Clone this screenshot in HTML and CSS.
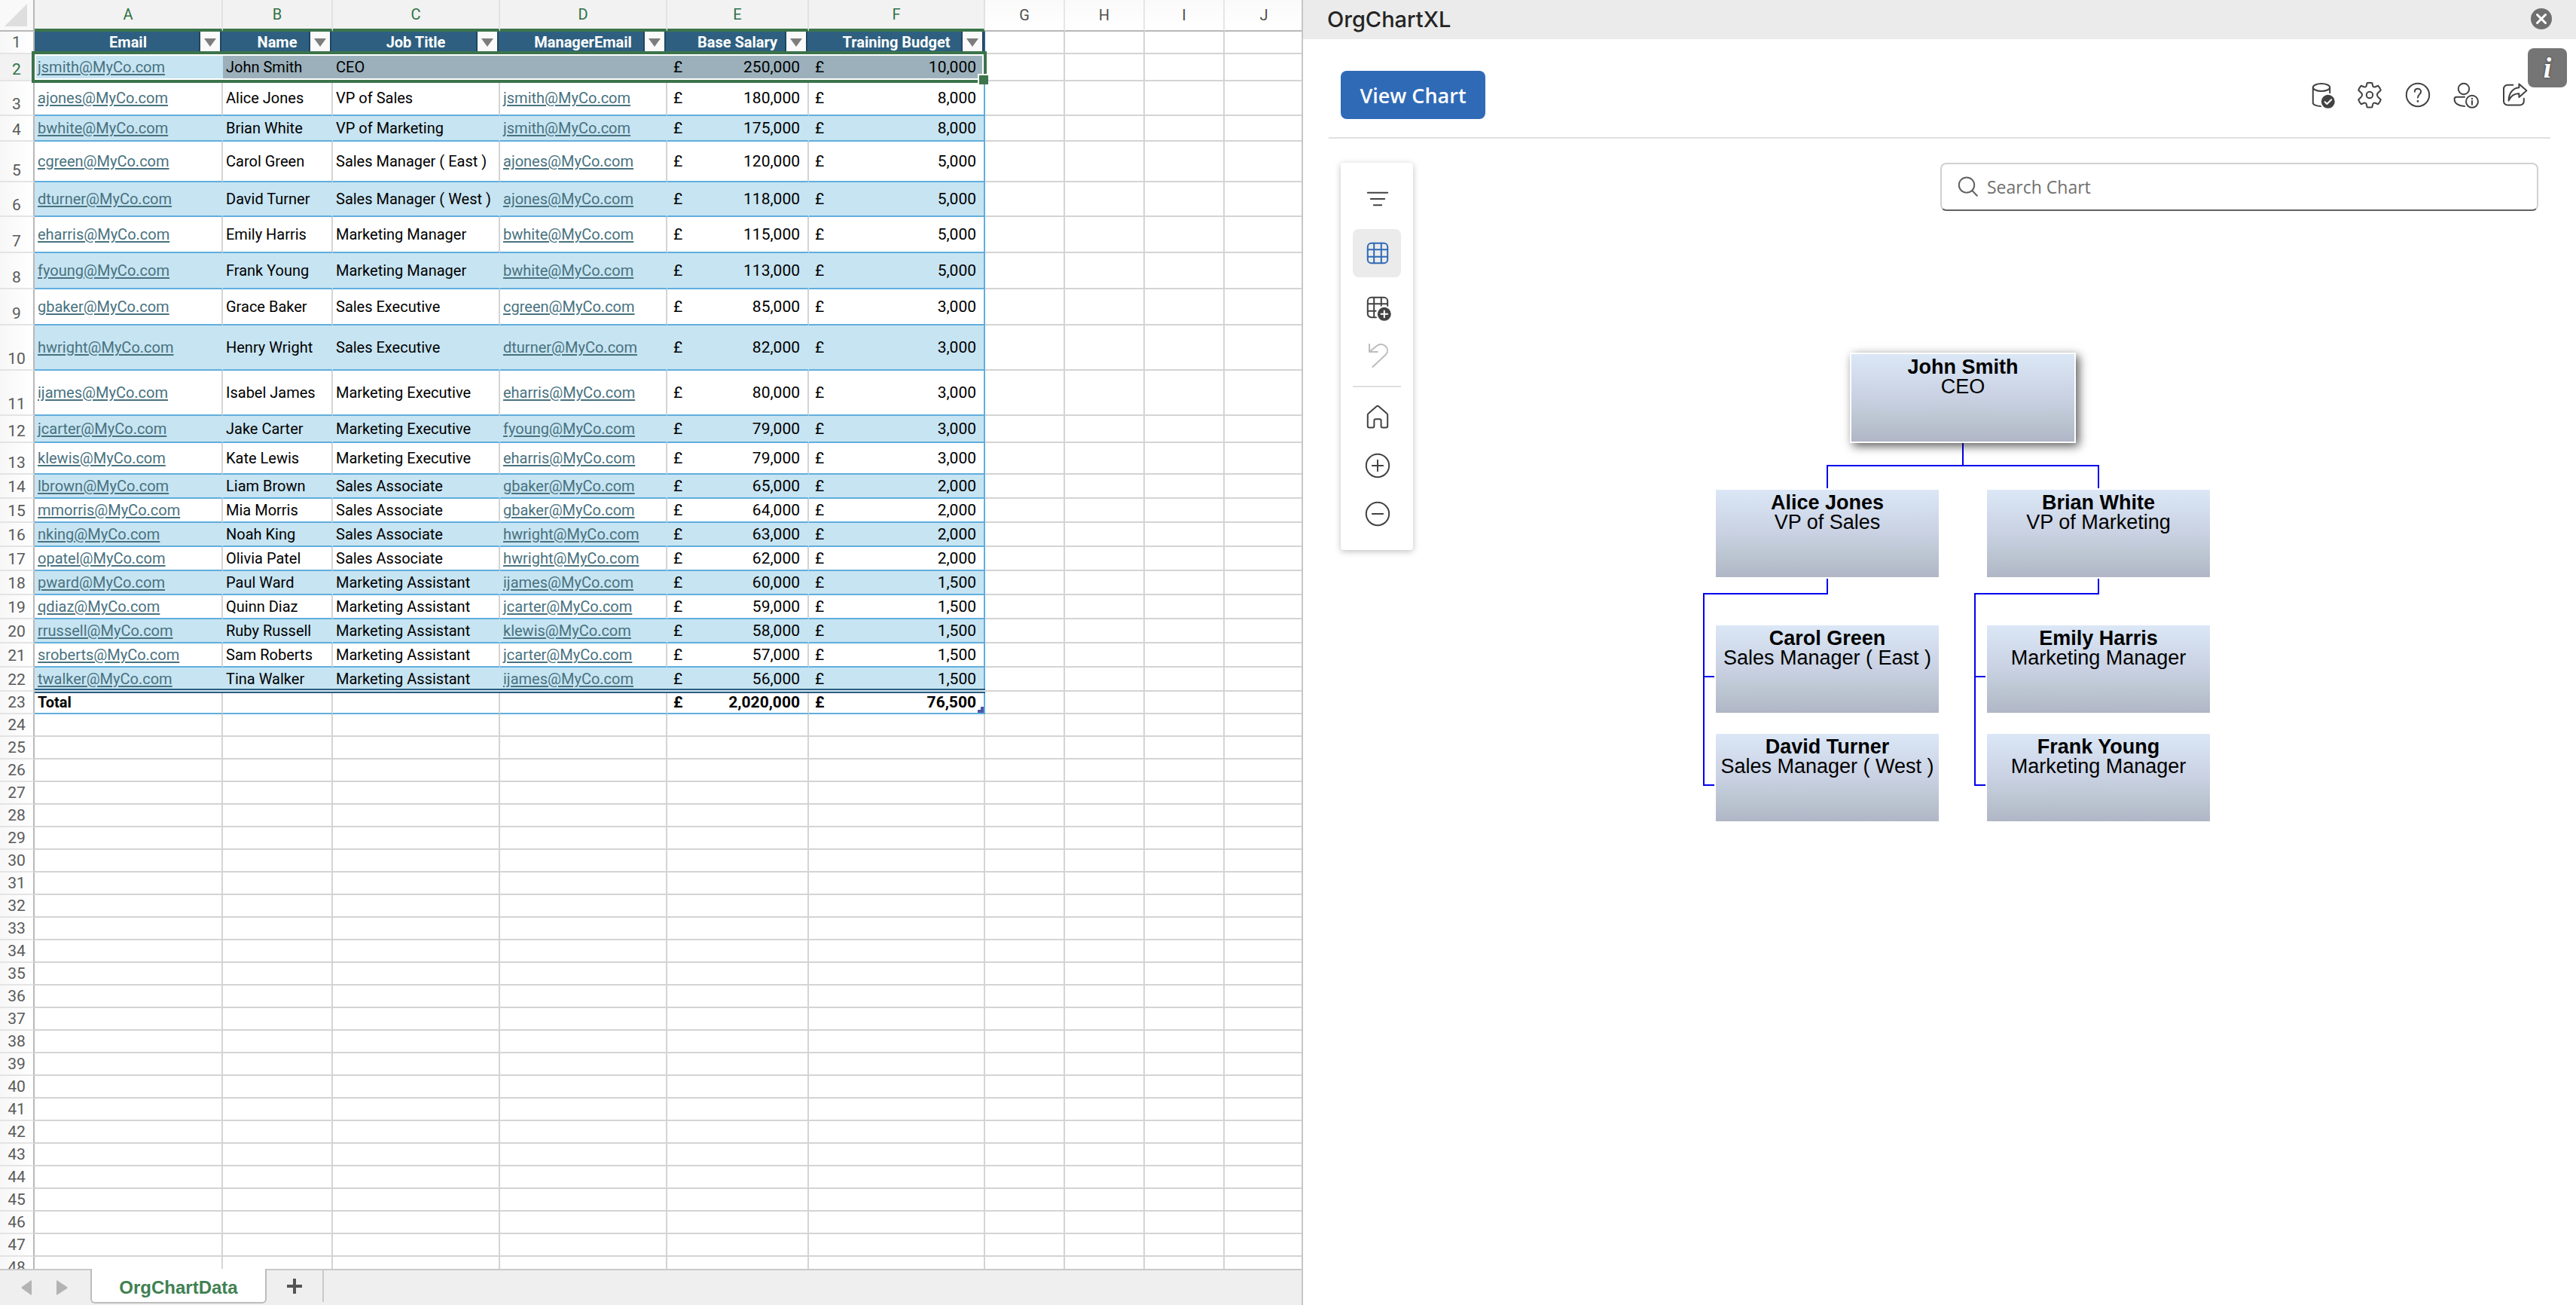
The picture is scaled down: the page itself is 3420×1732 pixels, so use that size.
FILE: index.html
```html
<!DOCTYPE html>
<html lang="en">
<head>
    <meta charset="UTF-8">
    <meta name="viewport" content="width=device-width, initial-scale=1.0">
    <title>OrgChartXL</title>
    <link rel="stylesheet" href="styles.css">
</head>
<body>
    <main class="workbook">
        <div class="grid-area">
            <table class="grid">
                <colgroup>
                    <col class="w-gutter"><col class="w-a"><col class="w-b"><col class="w-c"><col class="w-c"><col class="w-e"><col class="w-f">
                    <col class="w-g"><col class="w-g"><col class="w-g"><col class="w-g">
                </colgroup>
                <thead>
                    <tr>
                        <th class="corner"><svg width="30" height="30" viewBox="0 0 30 30"><path d="M30 0v30H0z" fill="#dedede"/></svg></th>
                        <th class="on">A</th><th class="on">B</th><th class="on">C</th><th class="on">D</th><th class="on">E</th><th class="on">F</th>
                        <th>G</th><th>H</th><th>I</th><th>J</th>
                    </tr>
                </thead>
                <tbody id="rows"></tbody>
            </table>
        </div>
        <nav class="tabs">
            <button class="arrow" aria-label="Previous sheet"><svg width="16" height="20" viewBox="0 0 16 20"><path d="M14 1v18q0 1-1 .5L1 11q-1-1 0-2L13 .5q1-.5 1 .5z"/></svg></button>
            <button class="arrow" aria-label="Next sheet"><svg width="16" height="20" viewBox="0 0 16 20"><path d="M1 1v18q0 1 1 .5L15 11q1-1 0-2L2 .5Q1 0 1 1z"/></svg></button>
            <button class="tab">OrgChartData</button>
            <button class="add" aria-label="Add sheet"><svg width="20" height="20" viewBox="0 0 20 20"><path d="M10 0v20M0 10h20" stroke="#555" stroke-width="4"/></svg></button>
        </nav>
    </main>

    <aside class="pane">
        <header class="pane-title">
            <h1>OrgChartXL</h1>
            <button class="close" aria-label="Close"><svg width="28" height="28" viewBox="0 0 28 28"><circle cx="14" cy="14" r="14" fill="#6f6f6f"/><path d="M8.500 8.500l11 11M19.500 8.500l-11 11" stroke="#fff" stroke-width="3" stroke-linecap="round"/></svg></button>
        </header>
        <button class="info" aria-label="Add-in info">i</button>

        <div class="pane-body">
            <div class="actions">
                <button class="view-chart">View Chart</button>
                <div class="action-icons">
                    <button class="icon" aria-label="Data source">
                        <svg viewBox="0 0 20 20"><ellipse cx="10" cy="5" rx="5.600" ry="2.500"/><path d="M4.400 5v10.200c0 1.300 2.300 2.300 5.400 2.300M15.600 5v3.800"/><circle class="badge" cx="14.400" cy="14.400" r="5"/><path class="mark" d="M12.300 14.600l1.400 1.400 2.900-2.900"/></svg>
                    </button>
                    <button class="icon" aria-label="Settings">
                        <svg viewBox="0 0 20 20"><circle cx="10" cy="10" r="2.100"/><path d="M8.300 2.100q1.700-.5 3.400 0l.4 1.900q.2.900 1.200.8.200 0 .5-.2l1.800-.7q1.300 1.300 1.800 3l-1.400 1.300q-1 .8-1 1.800t1 1.800l1.400 1.300q-.5 1.700-1.800 3l-1.800-.7q-1.400-.4-1.700.8l-.4 1.900q-1.700.4-3.400 0l-.4-1.900q-.4-1.200-1.700-.8l-1.800.7q-1.300-1.300-1.800-3L4 11.800q1-.8 1-1.800t-1-1.800L2.600 6.900q.5-1.700 1.800-3l1.800.7q1.300.4 1.700-.7z"/></svg>
                    </button>
                    <button class="icon" aria-label="Help">
                        <svg viewBox="0 0 20 20"><circle cx="10" cy="10" r="7.600"/><path d="M7.900 7.900c0-1.200.9-2 2.100-2s2.100.8 2.100 1.900c0 1.700-2.100 1.900-2.100 4"/><circle class="solid" cx="10" cy="14.200" r=".7"/></svg>
                    </button>
                    <button class="icon" aria-label="Account">
                        <svg viewBox="0 0 20 20"><circle cx="8.500" cy="6" r="3.600"/><path d="M9 11.400H3.600c-.7 0-1.300.6-1.300 1.300 0 3 3 4.800 6.700 4.800M14 14v2.400"/><circle cx="14" cy="14.400" r="4"/><circle class="solid" cx="14" cy="12.500" r=".6"/></svg>
                    </button>
                    <button class="icon" aria-label="Share">
                        <svg viewBox="0 0 20 20"><path d="M9.200 3.400H5.600A2.600 2.600 0 0 0 3 6v8.200a2.600 2.600 0 0 0 2.600 2.600h8.200a2.600 2.600 0 0 0 2.600-2.600v-1.800"/><path d="M13.200 2.700l5 4.400-5 4.400V9.100c-3.200-.2-5.300 1.200-6.900 4.700.1-4.400 2.200-8.300 6.900-8.700z"/></svg>
                    </button>
                </div>
            </div>

            <div class="stage">
                <div class="toolbar">
                    <button class="icon" aria-label="Filter"><svg viewBox="0 0 20 20"><path d="M3.400 5.900h13.200M5.400 10h9.200M7.400 14.100h5.200"/></svg></button>
                    <button class="icon active" aria-label="Grid"><svg viewBox="0 0 20 20"><rect x="3.400" y="3.400" width="13.200" height="13.200" rx="2.400"/><path d="M7.600 3.400v13.200M12.400 3.400v13.200M3.400 7.600h13.200M3.400 12.400h13.200"/></svg></button>
                    <button class="icon" aria-label="Add column"><svg viewBox="0 0 20 20"><path d="M9.200 16.600H5.800a2.400 2.400 0 0 1-2.400-2.400V5.800a2.400 2.400 0 0 1 2.400-2.400h8.400a2.400 2.400 0 0 1 2.400 2.400v3.400M7.600 3.400v13.200M12.400 3.400v5.800M3.400 7.600h13.200M3.400 12.400H9"/><circle class="badge" cx="14.400" cy="14.400" r="5"/><path class="mark" d="M14.400 12.200v4.400M12.200 14.400h4.400"/></svg></button>
                    <button class="icon" aria-label="Undo" disabled><svg viewBox="0 0 20 20"><path d="M4.500 2.500v5h5.400M4.700 7.300l4.600-3.700c4-3.200 9.500 1.500 6.200 5.600L6.700 17.500"/></svg></button>
                    <hr>
                    <button class="icon" aria-label="Home"><svg viewBox="0 0 20 20"><path d="M9.200 2.700a1.200 1.200 0 0 1 1.600 0l5.300 4.700q.5.400.5 1.100v7.300q0 1-1 1h-2.300q-1 0-1-1v-3.600q0-1.100-1-1.100H8.700q-1 0-1 1.100v3.600q0 1-1 1H4.400q-1 0-1-1V8.500q0-.7.5-1.100z"/></svg></button>
                    <button class="icon" aria-label="Zoom in"><svg viewBox="0 0 20 20"><circle cx="10" cy="10" r="7.600"/><path d="M10 6.400v7.200M6.400 10h7.200"/></svg></button>
                    <button class="icon" aria-label="Zoom out"><svg viewBox="0 0 20 20"><circle cx="10" cy="10" r="7.600"/><path d="M6.400 10h7.200"/></svg></button>
                </div>

                <div class="chart-area">
                    <label class="search">
                        <svg viewBox="0 0 20 20"><circle cx="8.500" cy="8.800" r="5.100"/><path d="M12.200 12.500l3.200 3.400"/></svg>
                        <input type="text" placeholder="Search Chart" aria-label="Search Chart">
                    </label>
                    <div class="chart-scroll">
                        <div class="org-chart">
                            <svg class="links" width="692" height="622" viewBox="0 0 692 622">
                                <path d="M346 120v30M166 180v-30h360v30"/>
                                <path d="M166 300v20H2v254h14M2 430h14"/>
                                <path d="M526 300v20H362v254h14M362 430h14"/>
                            </svg>
                            <div class="node n-ceo"><b>John Smith</b>CEO</div>
                            <div class="node n-sales"><b>Alice Jones</b>VP of Sales</div>
                            <div class="node n-marketing"><b>Brian White</b>VP of Marketing</div>
                            <div class="node n-east"><b>Carol Green</b>Sales Manager ( East )</div>
                            <div class="node n-emily"><b>Emily Harris</b>Marketing Manager</div>
                            <div class="node n-west"><b>David Turner</b>Sales Manager ( West )</div>
                            <div class="node n-frank"><b>Frank Young</b>Marketing Manager</div>
                        </div>
                    </div>
                </div>
            </div>
        </div>
    </aside>

    <script src="script.js"></script>
</body>
</html>
```
FILE: styles.css
```css
* {
    box-sizing: border-box;
}
body {
    margin: 0;
    height: 100vh;
    display: grid;
    grid-template-columns: 865fr 845fr;
    overflow: hidden;
    background: #fff;
    font-family: "Open Sans", sans-serif;
    color: #242424;
}
button {
    border: 0;
    padding: 0;
    background: none;
    font: inherit;
    color: inherit;
}

/* ---- worksheet ---- */
.workbook {
    display: flex;
    flex-direction: column;
    min-width: 0;
    height: 100vh;
    border-right: 2px solid #c6c6c6;
}
.grid-area {
    flex: 1;
    min-height: 0;
    overflow: hidden;
}
.grid {
    table-layout: fixed;
    width: 1732px;
    border-collapse: separate;
    border-spacing: 0;
    font-family: Roboto, sans-serif;
    font-size: 20px;
    line-height: 24px;
    color: #000;
}
.w-gutter { width: 46px; }
.w-a { width: 250px; }
.w-b { width: 146px; }
.w-c { width: 222px; }
.w-e { width: 188px; }
.w-f { width: 234px; }
.w-g { width: 106px; }

.grid thead th {
    height: 42px;
    padding: 0;
    font-weight: 400;
    color: #505050;
    background: linear-gradient(#fafafa, #fff);
    border-right: 2px solid #e6e6e6;
    border-bottom: 2px solid #b8b8b8;
}
.grid thead .on {
    color: #2f7145;
    background: #f2f2f2;
    border-bottom: 4px solid #3c744b;
    border-right-color: #e2e2e2;
}
.grid thead .corner {
    padding-left: 6px;
    border-right-color: #b8b8b8;
    background: #f9f9f9;
}
.corner svg {
    display: block;
}
.grid td {
    padding: 0 4px;
    border-right: 2px solid #d4d4d4;
    border-bottom: 2px solid #d4d4d4;
    white-space: nowrap;
}
.row-no {
    padding: 0;
    height: 30px;
    vertical-align: bottom;
    font-weight: 400;
    font-size: 21px;
    line-height: 28px;
    color: #5a5a5a;
    background: linear-gradient(90deg, #f7f7f7, #fff);
    border-right: 2px solid #b8b8b8;
    border-bottom: 2px solid #e4e4e4;
}
.h-32 .row-no { height: 32px; }
.h-34 .row-no { height: 34px; }
.h-36 .row-no { height: 36px; }
.h-42 .row-no { height: 42px; }
.h-46 .row-no { height: 46px; }
.h-48 .row-no { height: 48px; }
.h-54 .row-no { height: 54px; }
.h-60 .row-no { height: 60px; }

.grid .field {
    position: relative;
    background: #2e5f80;
    border-color: #2e5f80;
    color: #fff;
    font-weight: 700;
    text-align: center;
}
.filter {
    position: absolute;
    right: 0;
    top: 0;
    width: 30px;
    height: 28px;
    display: flex;
    align-items: center;
    justify-content: center;
    background: #fafafa;
    border: solid #1f4661;
    border-width: 0 2px;
}
.filter svg {
    fill: #7d7d7d;
}
.grid .data {
    border-bottom-color: #60aedd;
}
.band .data {
    background: #c7e4f2;
    border-right-color: #c7e4f2;
}
.grid .last {
    border-right-color: #60aedd;
}
.data a {
    color: #48727f;
    text-decoration-thickness: 2px;
    text-underline-offset: 2px;
}
.money {
    display: flex;
    justify-content: space-between;
    padding: 0 6px 0 4px;
    font-size: 21px;
}
.selected .row-no {
    color: #2f7145;
    background: #f2f2f2;
}
.selected .data {
    background: #9bb0bb;
    border-right-color: #9bb0bb;
}
.selected .anchor {
    position: relative;
    background: #c7e4f2;
    border-right-color: #c7e4f2;
}
.selection {
    position: absolute;
    z-index: 1;
    left: -4px;
    top: -4px;
    bottom: -4px;
    width: 1268px;
    border: 4px solid #3c744b;
    box-shadow: inset 0 0 0 2px #fff;
}
.selection::after {
    content: "";
    position: absolute;
    right: -6px;
    bottom: -6px;
    width: 12px;
    height: 12px;
    background: #3c744b;
    border: 2px solid #fff;
    border-width: 2px 0 0 2px;
}
.total .data {
    position: relative;
    font-weight: 700;
}
/* double rule across the six table columns */
.rule {
    position: absolute;
    left: 0;
    top: -4px;
    width: 1262px;
    height: 6px;
    background: #d5e6f0;
    border: solid #2b5d80;
    border-width: 2px 0;
    z-index: 1;
}
.resize {
    position: absolute;
    right: 0;
    bottom: 0;
    display: block;
}

.tabs {
    flex: 0 0 48px;
    display: flex;
    align-items: flex-start;
    background: #efefef;
    border-top: 2px solid #c9c9c9;
    padding-left: 28px;
}
.arrow {
    height: 46px;
    width: 46px;
    padding-top: 5px;
    text-align: left;
}
.arrow svg {
    fill: #b3b3b3;
}
.tab {
    width: 234px;
    height: 46px;
    margin-top: -2px;
    background: #fff;
    border: 2px solid #bdbdbd;
    border-top: 0;
    border-radius: 0 0 6px 6px;
    font-family: "Liberation Sans", sans-serif;
    font-size: 24px;
    font-weight: 700;
    padding-top: 6px;
    color: #3f8152;
}
.add {
    width: 76px;
    height: 42px;
    padding-top: 4px;
    border-right: 2px solid #c9c9c9;
}

/* ---- task pane ---- */
.pane {
    position: relative;
    min-width: 0;
}
.pane-title {
    height: 52px;
    padding: 0 32px 2px;
    display: flex;
    align-items: center;
    justify-content: space-between;
    background: #ebebeb;
}
.pane-title h1 {
    margin: 0;
    font-family: Inter, sans-serif;
    font-size: 29px;
    font-weight: 500;
}
.close svg {
    display: block;
}
.info {
    position: absolute;
    top: 64px;
    right: 12px;
    width: 52px;
    height: 52px;
    border-radius: 8px;
    background: #757575;
    color: #fff;
    font: italic bold 38px "Liberation Serif", serif;
    text-shadow: 0 0 3px #333;
}
.pane-body {
    padding: 0 34px;
}
.actions {
    display: flex;
    align-items: center;
    justify-content: space-between;
    height: 132px;
    padding: 18px 16px 0;
    border-bottom: 2px solid #e0e0e0;
}
.view-chart {
    width: 192px;
    height: 64px;
    border-radius: 8px;
    background: #2f6ab7;
    color: #fff;
    font-size: 27px;
    font-weight: 600;
}
.action-icons {
    display: flex;
}
.icon {
    width: 64px;
    height: 64px;
    display: flex;
    align-items: center;
    justify-content: center;
    color: #424242;
}
.icon svg,
.search svg {
    width: 40px;
    height: 40px;
    fill: none;
    stroke: currentColor;
    stroke-width: 1;
    stroke-linecap: round;
    stroke-linejoin: round;
}
.icon .solid {
    fill: currentColor;
    stroke: none;
}
.icon .badge {
    fill: currentColor;
    stroke: #fff;
}
.icon .mark {
    stroke: #fff;
}
.icon:disabled {
    color: #bdbdbd;
}
.stage {
    display: flex;
    align-items: flex-start;
    padding: 32px 16px 0;
}
.toolbar {
    width: 96px;
    padding: 16px;
    border-radius: 4px;
    background: #fff;
    box-shadow: 0 2px 8px rgba(0, 0, 0, 0.25);
}
.toolbar .icon {
    padding-left: 2px;
}
.toolbar .active {
    margin: 8px 0;
    border-radius: 8px;
    background: #ebebeb;
    color: #2f6ab7;
}
.toolbar hr {
    height: 2px;
    margin: 8px 0;
    border: 0;
    background: #e0e0e0;
}
.chart-area {
    flex: 1;
    display: flex;
    flex-direction: column;
}
.search {
    align-self: flex-end;
    width: 794px;
    height: 64px;
    display: flex;
    align-items: center;
    gap: 2px;
    padding: 0 16px;
    border: 2px solid #d1d1d1;
    border-bottom-color: #616161;
    border-radius: 8px;
    color: #616161;
}
.search input {
    flex: 1;
    border: 0;
    outline: 0;
    background: none;
    font: 23px "Open Sans", sans-serif;
}
.search input::placeholder {
    color: #707070;
}
.chart-scroll {
    display: flex;
    justify-content: center;
    padding: 188px 34px 0 0;
}

/* nodes are placed on a free canvas */
.org-chart {
    position: relative;
    width: 692px;
    height: 622px;
    font: 27px/26px "Liberation Sans", sans-serif;
    color: #000;
    text-align: center;
}
.links {
    position: absolute;
    left: 0;
    top: 0;
    fill: none;
    stroke: #0000ee;
    stroke-width: 2;
}
.node {
    position: absolute;
    width: 296px;
    height: 116px;
    padding-top: 4px;
    background: linear-gradient(#dbe7f6, #c9d1e2 50%, #bec8d5 70%, #b0b6c5);
}
.node b {
    display: block;
}
.n-ceo {
    left: 196px;
    top: 0;
    width: 300px;
    height: 120px;
    border: 2px solid #fff;
    box-shadow: 4px 4px 12px rgba(0, 0, 0, 0.65);
}
.n-sales { left: 18px; top: 182px; }
.n-marketing { left: 378px; top: 182px; }
.n-east { left: 18px; top: 362px; }
.n-emily { left: 378px; top: 362px; }
.n-west { left: 18px; top: 506px; }
.n-frank { left: 378px; top: 506px; }
```
FILE: script.js
```js
const fields = ['Email', 'Name', 'Job Title', 'ManagerEmail', 'Base Salary', 'Training Budget'];

// height, email, name, title, manager, salary, budget
const people = [
    [36, 'jsmith', 'John Smith', 'CEO', '', '250,000', '10,000'],
    [46, 'ajones', 'Alice Jones', 'VP of Sales', 'jsmith', '180,000', '8,000'],
    [34, 'bwhite', 'Brian White', 'VP of Marketing', 'jsmith', '175,000', '8,000'],
    [54, 'cgreen', 'Carol Green', 'Sales Manager ( East )', 'ajones', '120,000', '5,000'],
    [46, 'dturner', 'David Turner', 'Sales Manager ( West )', 'ajones', '118,000', '5,000'],
    [48, 'eharris', 'Emily Harris', 'Marketing Manager', 'bwhite', '115,000', '5,000'],
    [48, 'fyoung', 'Frank Young', 'Marketing Manager', 'bwhite', '113,000', '5,000'],
    [48, 'gbaker', 'Grace Baker', 'Sales Executive', 'cgreen', '85,000', '3,000'],
    [60, 'hwright', 'Henry Wright', 'Sales Executive', 'dturner', '82,000', '3,000'],
    [60, 'ijames', 'Isabel James', 'Marketing Executive', 'eharris', '80,000', '3,000'],
    [36, 'jcarter', 'Jake Carter', 'Marketing Executive', 'fyoung', '79,000', '3,000'],
    [42, 'klewis', 'Kate Lewis', 'Marketing Executive', 'eharris', '79,000', '3,000'],
    [32, 'lbrown', 'Liam Brown', 'Sales Associate', 'gbaker', '65,000', '2,000'],
    [32, 'mmorris', 'Mia Morris', 'Sales Associate', 'gbaker', '64,000', '2,000'],
    [32, 'nking', 'Noah King', 'Sales Associate', 'hwright', '63,000', '2,000'],
    [32, 'opatel', 'Olivia Patel', 'Sales Associate', 'hwright', '62,000', '2,000'],
    [32, 'pward', 'Paul Ward', 'Marketing Assistant', 'ijames', '60,000', '1,500'],
    [32, 'qdiaz', 'Quinn Diaz', 'Marketing Assistant', 'jcarter', '59,000', '1,500'],
    [32, 'rrussell', 'Ruby Russell', 'Marketing Assistant', 'klewis', '58,000', '1,500'],
    [32, 'sroberts', 'Sam Roberts', 'Marketing Assistant', 'jcarter', '57,000', '1,500'],
    [32, 'twalker', 'Tina Walker', 'Marketing Assistant', 'ijames', '56,000', '1,500']
];

const mail = user => user ? `<a href="mailto:${user}@MyCo.com">${user}@MyCo.com</a>` : '';
const money = value => `<div class="money"><span>£</span><span>${value}</span></div>`;
const blanks = n => '<td></td>'.repeat(n);

let html = '<tr><th class="row-no">1</th>';
fields.forEach(name => {
    html += `<td class="field">${name}<button class="filter" aria-label="Filter ${name}"><svg width="16" height="11" viewBox="0 0 16 11"><path d="M0 0h16L8 11z"/></svg></button></td>`;
});
html += blanks(4) + '</tr>';

people.forEach(([height, user, name, title, boss, salary, budget], i) => {
    const cls = ['h-' + height];
    if (i % 2 === 0) cls.push('band');
    if (i === 0) cls.push('selected');
    html += `<tr class="${cls.join(' ')}"><th class="row-no">${i + 2}</th>
        <td class="data${i === 0 ? ' anchor' : ''}">${mail(user)}${i === 0 ? '<div class="selection"></div>' : ''}</td>
        <td class="data">${name}</td><td class="data">${title}</td><td class="data">${mail(boss)}</td>
        <td class="data">${money(salary)}</td><td class="data last">${money(budget)}</td>${blanks(4)}</tr>`;
});

html += `<tr class="total"><th class="row-no">23</th><td class="data">Total<div class="rule"></div></td><td class="data"></td><td class="data"></td><td class="data"></td>
    <td class="data">${money('2,020,000')}</td>
    <td class="data last">${money('76,500')}<svg class="resize" width="8" height="8" viewBox="0 0 8 8"><path d="M4 0h4v8H0V4h4z" fill="#4b57a8"/></svg></td>${blanks(4)}</tr>`;

for (let n = 24; n <= 48; n++) {
    html += `<tr><th class="row-no">${n}</th>${blanks(10)}</tr>`;
}

document.getElementById('rows').innerHTML = html;
```
